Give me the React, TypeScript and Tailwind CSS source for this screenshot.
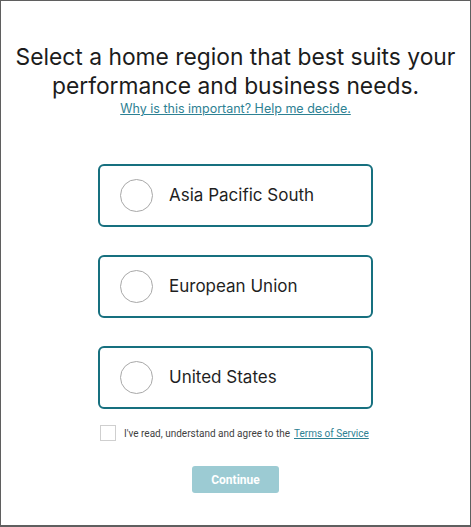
import React from "react";

const regions = ["Asia Pacific South", "European Union", "United States"];

export default function App() {
  return (
    <div
      className="w-[471px] h-[527px] box-border border border-b-2 border-[#5f5f5f] bg-white flex flex-col items-center"
      style={{ fontFamily: "Inter, 'Noto Sans', sans-serif" }}
    >
      <h1 className="mt-[41px] text-[22.8px] leading-[29px] text-center text-[#1c1c1c] font-normal">
        Select a home region that best suits your
        <br />
        performance and business needs.
      </h1>
      <a href="#" className="mt-[0px] text-[12.5px] leading-[18px] text-[#2e8193] underline">
        Why is this important? Help me decide.
      </a>
      <div className="mt-[46px] flex flex-col gap-[28px]">
        {regions.map((r) => (
          <div
            key={r}
            className="w-[275px] h-[63px] box-border border-2 border-[#17707f] rounded-[6px] flex items-center pl-[20px]"
          >
            <div className="w-[33px] h-[33px] rounded-full border border-[#a8a8a8] box-border" />
            <span className="ml-[16px] text-[17px] text-[#1f1f1f]">{r}</span>
          </div>
        ))}
      </div>
      <div className="mt-[16px] flex items-center w-[275px] pl-[2px] whitespace-nowrap">
        <div className="w-[16px] h-[16px] border border-[#cfcfcf] box-border shrink-0" />
        <span
          className="ml-[8px] text-[10px] text-[#3f3f3f]"
          style={{ fontFamily: "Roboto, 'Liberation Sans', sans-serif" }}
        >
          I've read, understand and agree to the
          <a href="#" className="ml-[4px] text-[#2e8193] underline">
            Terms of Service
          </a>
        </span>
      </div>
      <button
        className="mt-[25px] w-[87px] h-[27px] rounded-[3px] bg-[#9ccbd3] text-white font-bold text-[12px]"
        style={{ fontFamily: "Roboto, 'Liberation Sans', sans-serif" }}
      >
        Continue
      </button>
    </div>
  );
}
